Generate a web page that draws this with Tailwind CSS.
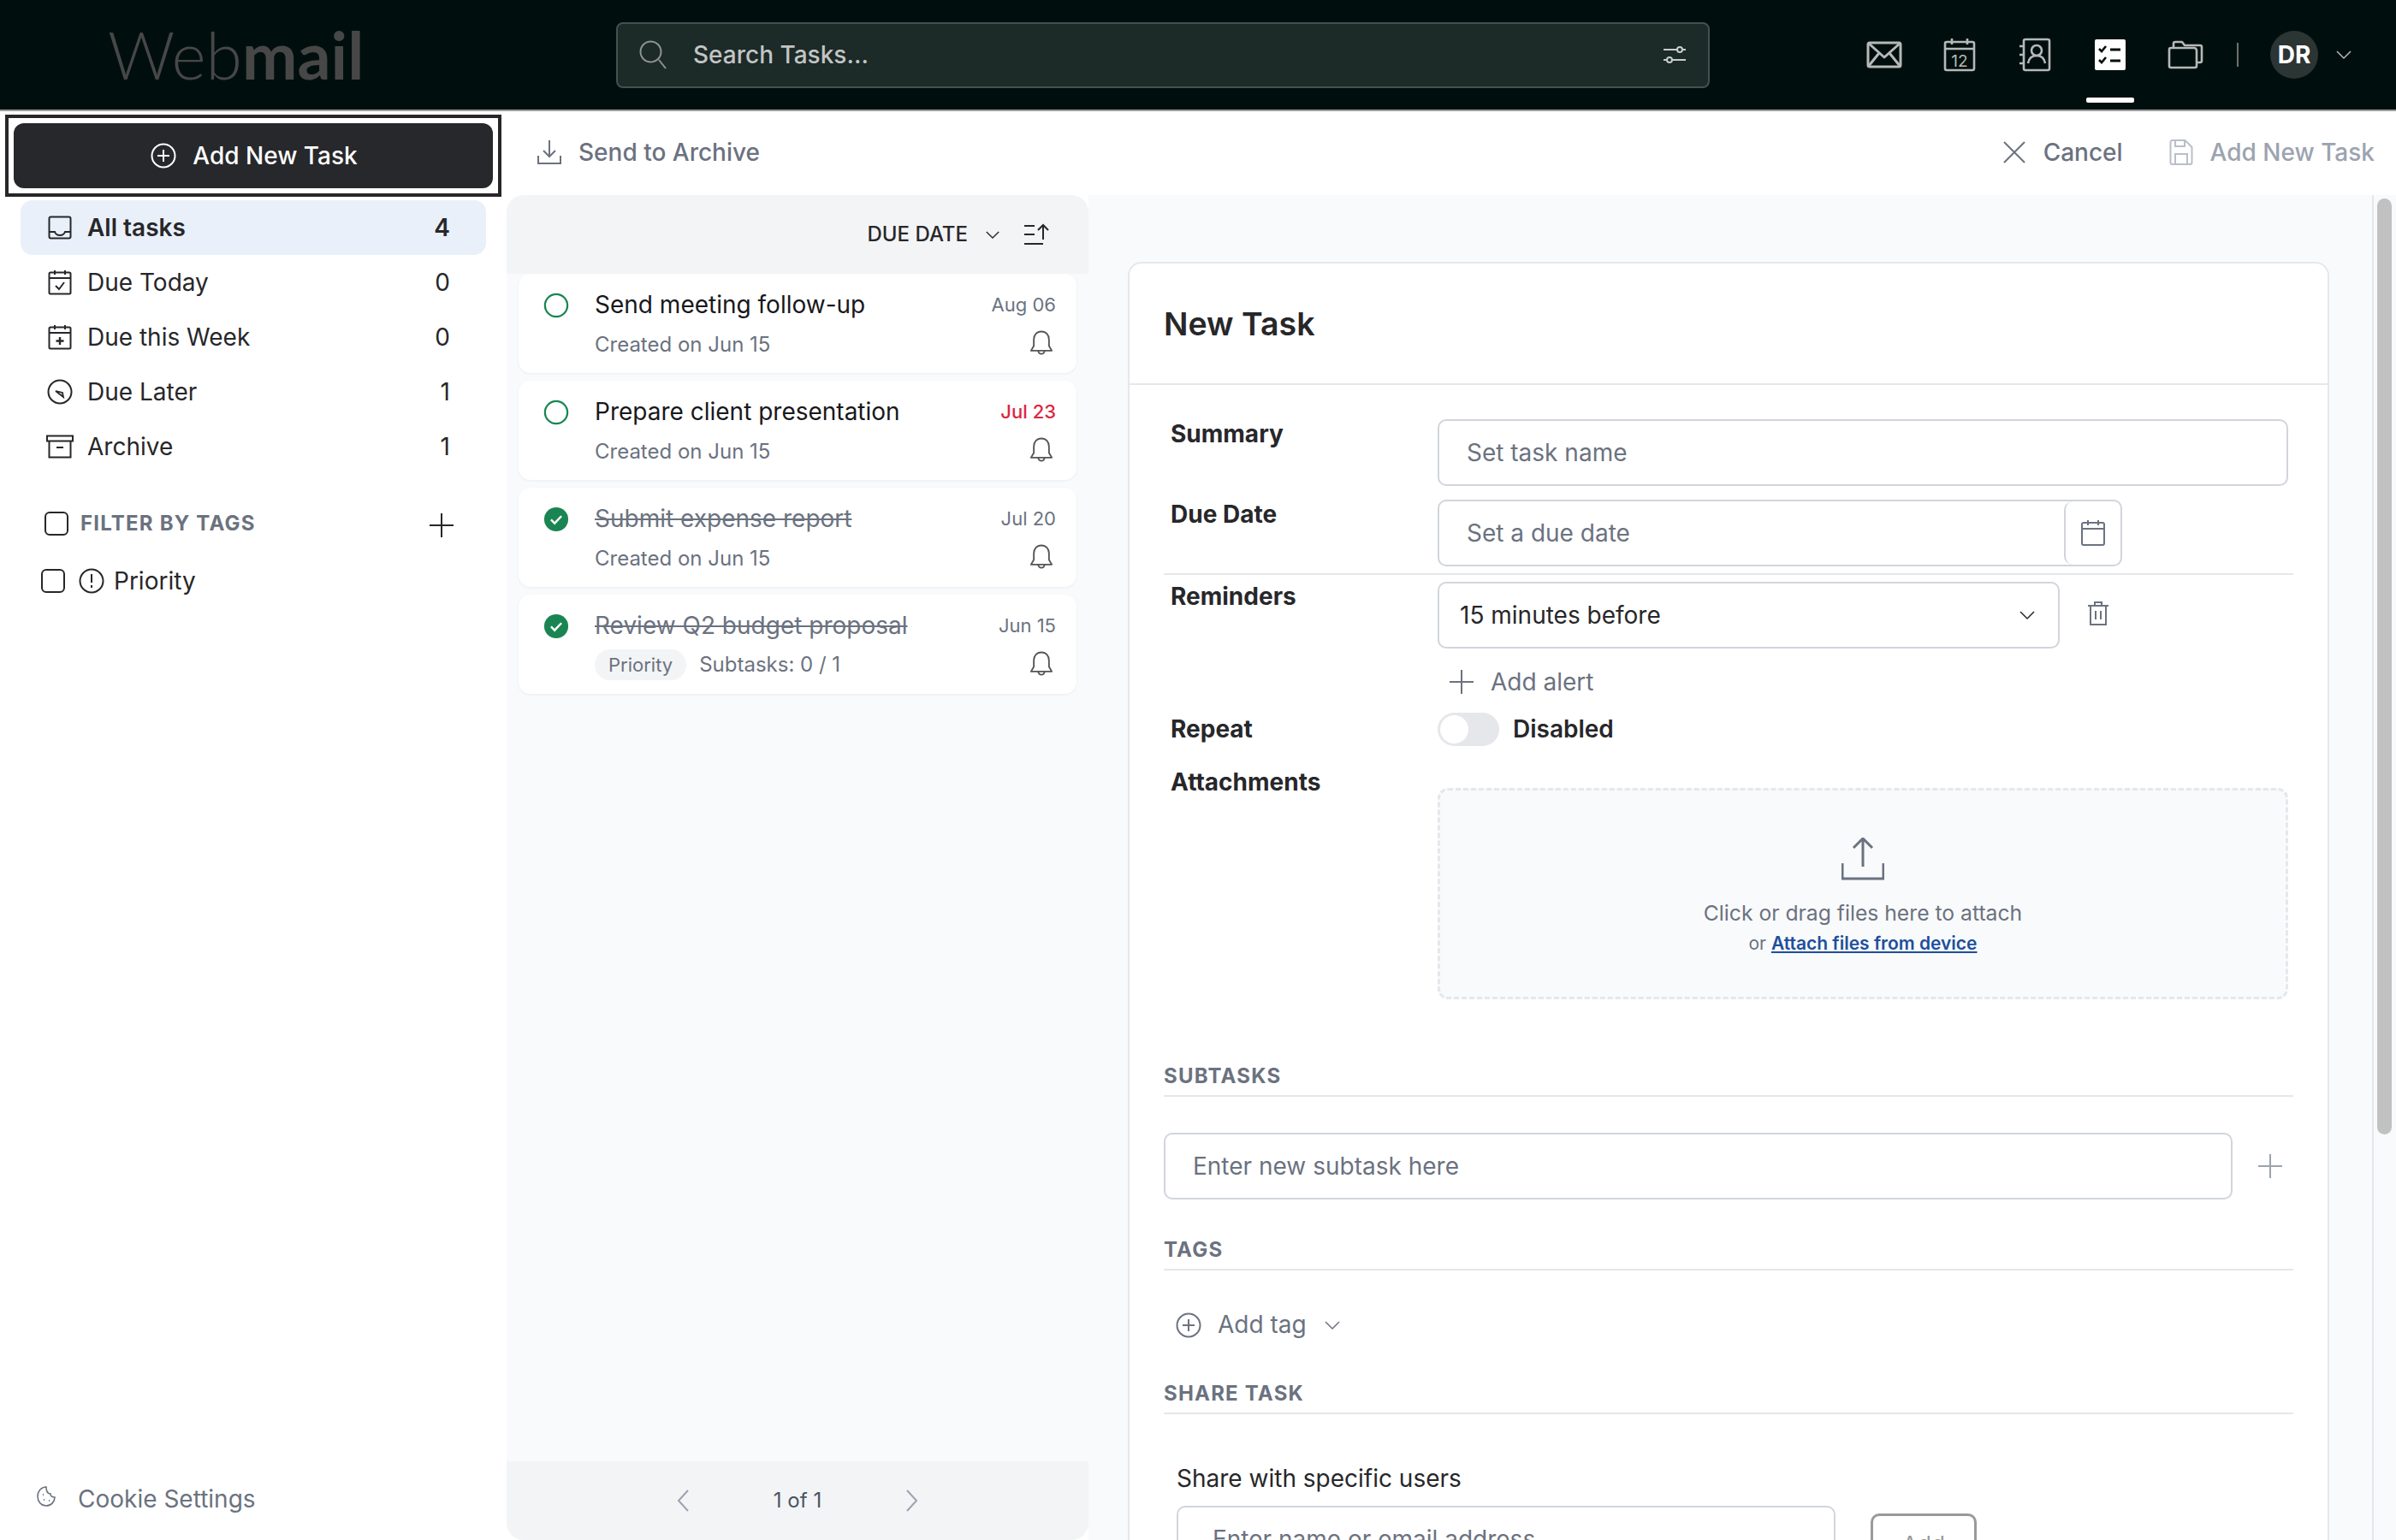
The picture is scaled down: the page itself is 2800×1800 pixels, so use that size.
<!DOCTYPE html>
<html lang="en">
<head>
<meta charset="utf-8">
<title>Webmail Tasks</title>
<script src="https://cdn.jsdelivr.net/npm/@tailwindcss/browser@4"></script>
</head>
<body class="m-0 bg-white">
<svg class="hidden" xmlns="http://www.w3.org/2000/svg">
  <symbol id="bell" viewBox="0 0 30 32"><path d="M15 1.500c-5.800 0-9.500 4.200-9.500 10v8L2 25.500h26l-3.500-6v-8c0-5.800-3.700-10-9.500-10z" fill="none" stroke="currentColor" stroke-width="2" stroke-linejoin="round"/><path d="M11 25.500a4 4 0 0 0 8 0" fill="none" stroke="currentColor" stroke-width="2"/></symbol>
  <symbol id="chev" viewBox="0 0 20 12"><path d="M2 2l8 8 8-8" fill="none" stroke="currentColor" stroke-width="1.500"/></symbol>
  <symbol id="done" viewBox="0 0 32 32"><circle cx="16" cy="16" r="15" fill="#1a8553"/><path d="M9.500 16.500l4.500 4.500 8.500-9" fill="none" stroke="#fff" stroke-width="2.600"/></symbol>
  <symbol id="open" viewBox="0 0 32 32"><circle cx="16" cy="16" r="14" fill="none" stroke="#1a8553" stroke-width="2.400"/></symbol>
</svg>
<div class="w-[2800px] h-[1800px] overflow-hidden flex flex-col font-[Inter] text-[#27272a]">

  <!-- top bar -->
  <header class="h-[130px] shrink-0 bg-[#000f0d] border-b-2 border-[#9a9c9a] flex items-center relative">
    <div class="w-[720px] shrink-0 pl-[126px] font-[Lato] text-[77px] leading-none text-[#474747] pb-[2px]"><span class="font-light">Web</span><span class="font-bold">mail</span></div>
    <div class="w-[1278px] h-[77px] shrink-0 bg-[#1c2a28] border-2 border-[#43524f] rounded-[8px] flex items-center pl-[24px] pr-[24px]">
      <svg class="w-[34px] h-[36px] text-[#8f9492]" viewBox="0 0 34 36" fill="none" stroke="currentColor" stroke-width="2"><circle cx="14.500" cy="14.500" r="12"/><path d="M24 24l8 10"/></svg>
      <span class="ml-[30px] text-[28px] font-medium text-[#c2c5c4]">Search Tasks...</span>
      <svg class="ml-auto w-[30px] h-[30px] text-[#c9cccb]" viewBox="0 0 30 30" fill="none" stroke="currentColor" stroke-width="2"><path d="M2 9h16M24 9h4M2 21h4M12 21h16"/><circle cx="21" cy="9" r="3"/><circle cx="9" cy="21" r="3"/></svg>
    </div>
    <nav class="flex items-center ml-[160px] text-[#b6b9b8]">
      <div class="w-[88px] h-[128px] flex items-center justify-center">
        <svg class="w-[42px] h-[32px]" viewBox="0 0 42 32" fill="none" stroke="currentColor" stroke-width="3" stroke-linejoin="round"><rect x="2" y="2" width="38" height="28" rx="2"/><path d="M2 2l19 17L40 2M2 30l13-16M40 30L27 14"/></svg>
      </div>
      <div class="w-[88px] h-[128px] flex items-center justify-center">
        <svg class="w-[38px] h-[40px]" viewBox="0 0 38 40" fill="none" stroke="currentColor" stroke-width="2.600"><rect x="2" y="5" width="34" height="33" rx="2"/><path d="M2 13h34M10 1v7M28 1v7"/><text x="19" y="34" text-anchor="middle" font-family="Inter" font-size="19" fill="currentColor" stroke="none">12</text></svg>
      </div>
      <div class="w-[88px] h-[128px] flex items-center justify-center">
        <svg class="w-[38px] h-[40px]" viewBox="0 0 38 40" fill="none" stroke="currentColor" stroke-width="2.600"><rect x="6" y="2" width="30" height="36" rx="2"/><path d="M1 10h6M1 20h6M1 30h6"/><circle cx="21" cy="15" r="6"/><path d="M11 30c1-6 5-9 10-9s9 3 10 9"/></svg>
      </div>
      <div class="w-[88px] h-[128px] flex flex-col items-center justify-center relative">
        <svg class="w-[36px] h-[36px]" viewBox="0 0 36 36"><rect width="36" height="36" rx="2" fill="#fff"/><path d="M5 11l3 3 5-6M5 24l3 3 5-6" fill="none" stroke="#000f0d" stroke-width="2.600"/><path d="M18 12h12M18 25h12" stroke="#000f0d" stroke-width="3"/></svg>
        <div class="absolute left-[16px] top-[114px] w-[56px] h-[6px] bg-white rounded-[2px]"></div>
      </div>
      <div class="w-[88px] h-[128px] flex items-center justify-center">
        <svg class="w-[42px] h-[34px]" viewBox="0 0 42 34" fill="none" stroke="currentColor" stroke-width="2.600" stroke-linejoin="round"><path d="M2 30V11a2 2 0 0 1 2-2h27a3 3 0 0 1 3 3v18a2 2 0 0 1-2 2H4a2 2 0 0 1-2-2z"/><path d="M7 9V4a2 2 0 0 1 2-2h8l3 4h18a2 2 0 0 1 2 2v16a2 2 0 0 1-2 2h-4"/></svg>
      </div>
      <div class="w-[2px] h-[28px] bg-[#6a716f] ml-[16px]"></div>
      <div class="w-[56px] h-[56px] rounded-full bg-[#2b3533] ml-[37px] flex items-center justify-center text-white text-[28px] font-bold">DR</div>
      <svg class="w-[20px] h-[12px] ml-[20px] text-[#b6b9b8]"><use href="#chev"/></svg>
    </nav>
  </header>

  <div class="flex-1 flex min-h-0">
    <!-- sidebar -->
    <aside class="w-[592px] shrink-0 flex flex-col">
      <div class="mt-[4px] ml-[6px] w-[580px] h-[96px] border-4 border-[#27272a] p-[6px] shrink-0">
        <button class="w-full h-full rounded-[12px] bg-[#27282b] text-white flex items-center justify-center gap-[19px] pl-[2px] text-[28px] font-medium">
          <svg class="w-[30px] h-[30px]" viewBox="0 0 30 30" fill="none" stroke="currentColor" stroke-width="2"><circle cx="15" cy="15" r="13.500"/><path d="M15 8v14M8 15h14"/></svg>
          Add New Task
        </button>
      </div>
      <ul class="mt-[4px] ml-[24px] w-[544px] text-[28px]">
        <li class="h-[64px] rounded-[14px] bg-[#e9f0fa] flex items-center pl-[32px] pr-[42px] font-semibold">
          <svg class="w-[28px] h-[28px] mr-[18px] shrink-0" viewBox="0 0 28 28" fill="none" stroke="currentColor" stroke-width="2"><rect x="1.500" y="1.500" width="25" height="25" rx="2"/><path d="M1.500 19H8c1 3 3 4 6 4s5-1 6-4h6.500"/></svg>
          All tasks<span class="ml-auto">4</span>
        </li>
        <li class="h-[64px] flex items-center pl-[32px] pr-[42px]">
          <svg class="w-[28px] h-[30px] mr-[18px] shrink-0" viewBox="0 0 28 30" fill="none" stroke="currentColor" stroke-width="2"><rect x="1.500" y="3.500" width="25" height="25" rx="1.500"/><path d="M1.500 10h25M8 1v5M20 1v5"/><path d="M9 19l4 4 6-8"/></svg>
          Due Today<span class="ml-auto">0</span>
        </li>
        <li class="h-[64px] flex items-center pl-[32px] pr-[42px]">
          <svg class="w-[28px] h-[30px] mr-[18px] shrink-0" viewBox="0 0 28 30" fill="none" stroke="currentColor" stroke-width="2"><rect x="1.500" y="3.500" width="25" height="25" rx="1.500"/><path d="M1.500 10h25M8 1v5M20 1v5"/><path d="M14 15v9M9.500 19.500h9" stroke-width="2.400"/></svg>
          Due this Week<span class="ml-auto">0</span>
        </li>
        <li class="h-[64px] flex items-center pl-[32px] pr-[42px]">
          <svg class="w-[30px] h-[30px] ml-[-1px] mr-[17px] shrink-0" viewBox="0 0 30 30" fill="none" stroke="currentColor" stroke-width="2"><circle cx="15" cy="15" r="13.500"/><path d="M10 14l8 2 1 5z" stroke-width="1.800"/></svg>
          Due Later<span class="ml-auto">1</span>
        </li>
        <li class="h-[64px] flex items-center pl-[30px] pr-[42px]">
          <svg class="w-[32px] h-[28px] mr-[16px] shrink-0" viewBox="0 0 32 28" fill="none" stroke="currentColor" stroke-width="2"><rect x="1" y="1.500" width="30" height="6"/><path d="M3.500 7.500v19h25v-19M12 15h8"/></svg>
          Archive<span class="ml-auto">1</span>
        </li>
      </ul>
      <div class="mt-[40px] flex items-center pl-[52px] pr-[62px]">
        <span class="w-[28px] h-[28px] border-2 border-[#27272a] rounded-[6px] shrink-0"></span>
        <span class="ml-[14px] text-[24px] font-bold tracking-[0.05em] text-[#6b7280]">FILTER BY TAGS</span>
        <svg class="ml-auto w-[28px] h-[28px] mt-[3px]" viewBox="0 0 28 28" stroke="currentColor" stroke-width="2"><path d="M14 0v28M0 14h28"/></svg>
      </div>
      <div class="mt-[28px] flex items-center pl-[48px] text-[28px]">
        <span class="w-[28px] h-[28px] border-2 border-[#27272a] rounded-[6px] shrink-0"></span>
        <svg class="ml-[16px] w-[30px] h-[30px]" viewBox="0 0 30 30" fill="none" stroke="currentColor" stroke-width="2"><circle cx="15" cy="15" r="13.500"/><path d="M15 7v10M15 20v3"/></svg>
        <span class="ml-[11px]">Priority</span>
      </div>
      <div class="mt-auto mb-[27px] flex items-center pl-[42px] text-[#6b7280] text-[28px]">
        <svg class="w-[24px] h-[26px] mb-[6px] shrink-0" viewBox="0 0 24 26" fill="none" stroke="currentColor" stroke-width="1.600"><path d="M12 2c-6 0-10 5-10 11s4 11 10 11 10-5 10-10c-3 0-5-1-5-4-3 0-5-3-5-8z"/><path d="M8 11h1M9 17h1M15 18h1" stroke-width="2.200"/></svg>
        <span class="ml-[25px]">Cookie Settings</span>
      </div>
    </aside>

    <!-- content -->
    <div class="flex-1 min-w-0 flex flex-col">
      <div class="h-[98px] shrink-0 flex items-center text-[28px] font-medium pb-[3px]">
        <svg class="ml-[36px] w-[28px] h-[30px] text-[#6b7280]" viewBox="0 0 28 30" fill="none" stroke="currentColor" stroke-width="2"><path d="M14 1v19M7 13l7 7 7-7M1 19v9h26v-9"/></svg>
        <span class="ml-[20px] text-[#6b7280]">Send to Archive</span>
        <svg class="ml-auto w-[26px] h-[26px] text-[#6b7280]" viewBox="0 0 26 26" stroke="currentColor" stroke-width="2"><path d="M1 1l24 24M25 1L1 25"/></svg>
        <span class="ml-[21px] text-[#6b7280]">Cancel</span>
        <svg class="ml-[54px] w-[28px] h-[32px] text-[#b9bfc7]" viewBox="0 0 28 32" fill="none" stroke="currentColor" stroke-width="2"><path d="M1.500 4a2 2 0 0 1 2-2h15l8 8v18a2 2 0 0 1-2 2h-21a2 2 0 0 1-2-2z"/><path d="M7 2v7h11V2M7 30V18h14v12"/></svg>
        <span class="ml-[20px] mr-[25px] text-[#9ca3af]">Add New Task</span>
      </div>

      <div class="flex-1 min-h-0 flex">
        <!-- list -->
        <section class="w-[680px] shrink-0 bg-[#f9fafb] flex flex-col rounded-[20px] overflow-hidden">
          <div class="h-[92px] shrink-0 bg-[#f3f4f6] flex items-center justify-end pr-[46px]">
            <span class="text-[24px] font-medium">DUE DATE</span>
            <svg class="ml-[20px] w-[18px] h-[11px]"><use href="#chev"/></svg>
            <svg class="ml-[27px] w-[30px] h-[26px]" viewBox="0 0 30 26" fill="none" stroke="currentColor" stroke-width="2"><path d="M1 3h12M1 13h12M1 24h22M23 19V2M17 8l6-6 6 6"/></svg>
          </div>
          <div class="flex-1 px-[14px] flex flex-col gap-[9px]">
            <article class="h-[116px] bg-white rounded-[14px] shadow-[0_1px_3px_rgba(0,0,0,0.06)] flex pl-[29px] pr-[24px] pt-[18px]">
              <svg class="w-[30px] h-[30px] mt-[4px] shrink-0"><use href="#open"/></svg>
              <div class="ml-[30px]">
                <div class="text-[28px] leading-[36px] text-[#18181b]">Send meeting follow-up</div>
                <div class="mt-[13px] text-[24px] leading-[32px] text-[#6b7280]">Created on Jun 15</div>
              </div>
              <div class="ml-auto flex flex-col items-end">
                <div class="text-[22px] leading-[36px] text-[#6b7280]">Aug 06</div>
                <svg class="mt-[12px] mr-[3px] w-[28px] h-[30px] text-[#555]"><use href="#bell"/></svg>
              </div>
            </article>
            <article class="h-[116px] bg-white rounded-[14px] shadow-[0_1px_3px_rgba(0,0,0,0.06)] flex pl-[29px] pr-[24px] pt-[18px]">
              <svg class="w-[30px] h-[30px] mt-[4px] shrink-0"><use href="#open"/></svg>
              <div class="ml-[30px]">
                <div class="text-[28px] leading-[36px] text-[#18181b]">Prepare client presentation</div>
                <div class="mt-[13px] text-[24px] leading-[32px] text-[#6b7280]">Created on Jun 15</div>
              </div>
              <div class="ml-auto flex flex-col items-end">
                <div class="text-[22px] leading-[36px] text-[#dc2640] font-medium">Jul 23</div>
                <svg class="mt-[12px] mr-[3px] w-[28px] h-[30px] text-[#555]"><use href="#bell"/></svg>
              </div>
            </article>
            <article class="h-[116px] bg-white rounded-[14px] shadow-[0_1px_3px_rgba(0,0,0,0.06)] flex pl-[29px] pr-[24px] pt-[18px]">
              <svg class="w-[30px] h-[30px] mt-[4px] shrink-0"><use href="#done"/></svg>
              <div class="ml-[30px]">
                <div class="text-[28px] leading-[36px] text-[#6b7280] line-through">Submit expense report</div>
                <div class="mt-[13px] text-[24px] leading-[32px] text-[#6b7280]">Created on Jun 15</div>
              </div>
              <div class="ml-auto flex flex-col items-end">
                <div class="text-[22px] leading-[36px] text-[#6b7280]">Jul 20</div>
                <svg class="mt-[12px] mr-[3px] w-[28px] h-[30px] text-[#555]"><use href="#bell"/></svg>
              </div>
            </article>
            <article class="h-[116px] bg-white rounded-[14px] shadow-[0_1px_3px_rgba(0,0,0,0.06)] flex pl-[29px] pr-[24px] pt-[18px]">
              <svg class="w-[30px] h-[30px] mt-[4px] shrink-0"><use href="#done"/></svg>
              <div class="ml-[30px]">
                <div class="text-[28px] leading-[36px] text-[#6b7280] line-through">Review Q2 budget proposal</div>
                <div class="mt-[10px] flex items-center text-[24px] text-[#6b7280]">
                  <span class="h-[36px] leading-[36px] px-[16px] rounded-full bg-[#f3f4f6] text-[22px]">Priority</span>
                  <span class="ml-[15px]">Subtasks: 0 / 1</span>
                </div>
              </div>
              <div class="ml-auto flex flex-col items-end">
                <div class="text-[22px] leading-[36px] text-[#6b7280]">Jun 15</div>
                <svg class="mt-[12px] mr-[3px] w-[28px] h-[30px] text-[#555]"><use href="#bell"/></svg>
              </div>
            </article>
          </div>
          <div class="h-[92px] shrink-0 bg-[#f3f4f6] flex items-center justify-center">
            <svg class="w-[16px] h-[28px] text-[#9ca3af]" viewBox="0 0 16 28" fill="none" stroke="currentColor" stroke-width="2"><path d="M14 2L3 14l11 12"/></svg>
            <span class="mx-[98px] text-[24px] text-[#4b5563]">1 of 1</span>
            <svg class="w-[16px] h-[28px] text-[#9ca3af]" viewBox="0 0 16 28" fill="none" stroke="currentColor" stroke-width="2"><path d="M2 2l11 12L2 26"/></svg>
          </div>
        </section>

        <!-- detail -->
        <section class="flex-1 min-w-0 bg-[#f9fafb] flex overflow-hidden">
          <div class="w-[1500px] shrink-0 pt-[78px] pl-[46px]">
            <div class="w-[1404px] bg-white border-2 border-b-0 border-[#e5e7eb] rounded-t-[16px] h-[1600px]">
              <h2 class="h-[142px] flex items-center pl-[40px] pt-[2px] text-[37.500px] font-semibold border-b-2 border-[#e5e7eb]">New Task</h2>
              <div class="px-[40px] pt-[40px] text-[28px]">
                <div class="flex">
                  <label class="w-[320px] pl-[8px] leading-[34px] font-bold shrink-0">Summary</label>
                  <div class="w-[994px] h-[78px] border-2 border-[#d1d5db] rounded-[10px] flex items-center pl-[32px] text-[#6b7280]">Set task name</div>
                </div>
                <div class="flex mt-[16px]">
                  <label class="w-[320px] pl-[8px] leading-[34px] font-bold shrink-0">Due Date</label>
                  <div class="w-[800px] h-[78px] border-2 border-[#d1d5db] rounded-[10px] flex">
                    <div class="flex-1 flex items-center pl-[32px] text-[#6b7280]">Set a due date</div>
                    <div class="w-[66px] border-l-2 border-[#d1d5db] rounded-[10px] flex items-center justify-center">
                      <svg class="w-[30px] h-[32px] text-[#6b7280]" viewBox="0 0 30 32" fill="none" stroke="currentColor" stroke-width="2"><rect x="2" y="4" width="26" height="26" rx="2"/><path d="M2 11h26M9 1v6M21 1v6"/></svg>
                    </div>
                  </div>
                </div>
                <div class="mt-[8px] h-[2px] bg-[#e5e7eb]"></div>
                <div class="flex mt-[8px]">
                  <label class="w-[320px] pl-[8px] leading-[34px] font-bold shrink-0">Reminders</label>
                  <div class="w-[727px] h-[78px] border-2 border-[#d1d5db] rounded-[10px] flex items-center pl-[24px] pr-[26px]">
                    15 minutes before
                    <svg class="ml-auto w-[20px] h-[12px]"><use href="#chev"/></svg>
                  </div>
                  <svg class="ml-[32px] mt-[22px] w-[26px] h-[30px] text-[#6b7280]" viewBox="0 0 26 30" fill="none" stroke="currentColor" stroke-width="2"><path d="M1 6h24M4 6v22h18V6M9 6V2h8v4M10 12v10M16 12v10"/></svg>
                </div>
                <div class="flex items-center mt-[19px] ml-[334px] h-[40px] text-[#6b7280]">
                  <svg class="w-[28px] h-[28px]" viewBox="0 0 28 28" stroke="currentColor" stroke-width="2"><path d="M14 0v28M0 14h28"/></svg>
                  <span class="ml-[20px]">Add alert</span>
                </div>
                <div class="flex items-center mt-[14px]">
                  <label class="w-[320px] pl-[8px] leading-[34px] font-bold shrink-0">Repeat</label>
                  <div class="w-[72px] h-[39px] rounded-full bg-[#e5e7eb] relative shrink-0"><span class="absolute left-[3px] top-[3px] w-[33px] h-[33px] rounded-full bg-white"></span></div>
                  <span class="ml-[16px] font-semibold">Disabled</span>
                </div>
                <div class="flex mt-[24px]">
                  <label class="w-[320px] pl-[8px] leading-[34px] font-bold shrink-0">Attachments</label>
                  <div class="mt-[24px] w-[994px] h-[247px] border-[3px] border-dashed border-[#e5e7eb] rounded-[12px] bg-[#f9fafb] flex flex-col items-center pt-[55px] text-[#6b7280]">
                    <svg class="w-[50px] h-[50px]" viewBox="0 0 50 50" fill="none" stroke="currentColor" stroke-width="3"><path d="M25 34V2M14 12L25 1l11 11M1 30v18h48V30"/></svg>
                    <div class="mt-[22px] text-[24.700px] leading-[32px]">Click or drag files here to attach</div>
                    <div class="mt-[5px] text-[21px] leading-[30px]">or <a class="text-[#1e4f9c] font-semibold underline">Attach files from device</a></div>
                  </div>
                </div>
                <h3 class="mt-[73px] text-[24px] tracking-[0.05em] leading-[34px] font-bold text-[#6b7280] border-b-2 border-[#e5e7eb] pb-[5px]">SUBTASKS</h3>
                <div class="flex items-center mt-[42px]">
                  <div class="w-[1249px] h-[78px] border-2 border-[#d1d5db] rounded-[10px] flex items-center pl-[32px] text-[#6b7280]">Enter new subtask here</div>
                  <svg class="ml-[30px] w-[28px] h-[28px] text-[#9ca3af]" viewBox="0 0 28 28" stroke="currentColor" stroke-width="2"><path d="M14 0v28M0 14h28"/></svg>
                </div>
                <h3 class="mt-[42px] text-[24px] tracking-[0.05em] leading-[34px] font-bold text-[#6b7280] border-b-2 border-[#e5e7eb] pb-[5px]">TAGS</h3>
                <div class="flex items-center mt-[42px] pl-[14px] text-[#6b7280]">
                  <svg class="w-[30px] h-[30px] mt-[2px]" viewBox="0 0 30 30" fill="none" stroke="currentColor" stroke-width="2"><circle cx="15" cy="15" r="13.500"/><path d="M15 8v14M8 15h14"/></svg>
                  <span class="ml-[19px]">Add tag</span>
                  <svg class="ml-[20px] w-[20px] h-[12px] mt-[2px]"><use href="#chev"/></svg>
                </div>
                <h3 class="mt-[43px] text-[24px] tracking-[0.05em] leading-[34px] font-bold text-[#6b7280] border-b-2 border-[#e5e7eb] pb-[5px]">SHARE TASK</h3>
                <div class="mt-[58px] pl-[15px] leading-[34px] text-[#27272a]">Share with specific users</div>
                <div class="flex items-start mt-[15px] pl-[15px]">
                  <div class="w-[770px] h-[78px] border-2 border-[#d1d5db] rounded-[10px] flex items-center pl-[40px] text-[#6b7280]">Enter name or email address</div>
                  <div class="ml-[41px] mt-[9px] w-[124px] h-[70px] border-[3px] border-[#9a9a9a] rounded-[10px] flex items-center justify-center text-[#9a9a9a] text-[26px]">Add</div>
                </div>
              </div>
            </div>
          </div>
          <div class="flex-1 border-l-2 border-[#e5e7eb] pl-[4px] pt-[4px]">
            <div class="w-[17px] h-[1094px] rounded-full bg-[#c1c1c1]"></div>
          </div>
        </section>
      </div>
    </div>
  </div>
</div>
</body>
</html>
